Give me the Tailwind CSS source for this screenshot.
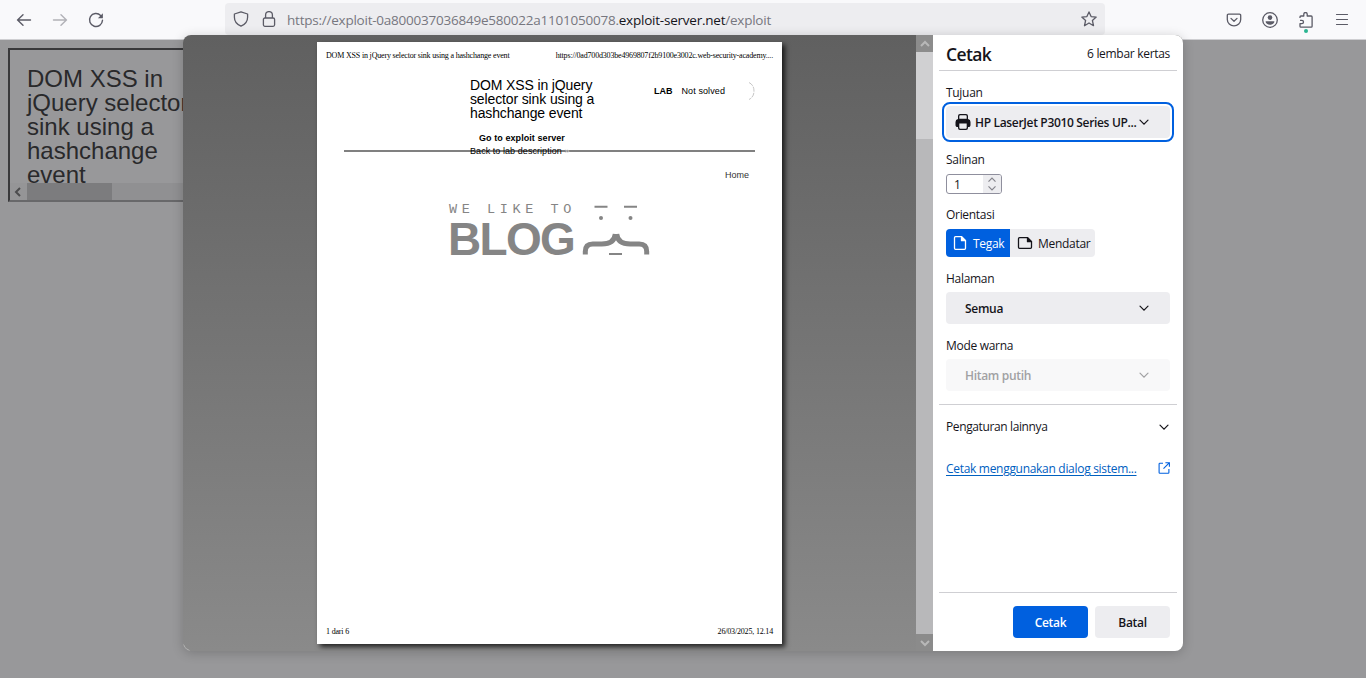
<!DOCTYPE html>
<html lang="id">
<head>
<meta charset="utf-8">
<title>Cetak</title>
<script src="https://cdn.jsdelivr.net/npm/@tailwindcss/browser@4"></script>
</head>
<body class="relative flex h-[678px] w-[1366px] flex-col overflow-hidden bg-[#98989a] font-['Open_Sans','Noto_Sans',sans-serif] text-[#15141a]">

<!-- Toolbar -->
<header class="flex h-10 shrink-0 items-center border-b border-[#cfcfd2] bg-[#f9f9fb] text-[#5b5b66]">
  <div class="flex w-[225px] shrink-0 items-center gap-5 pl-4">
    <svg class="size-4" viewBox="0 0 16 16" fill="none" stroke="currentColor" stroke-width="1.4" stroke-linecap="round" stroke-linejoin="round"><path d="M14.5 8H1.500M7 2.800 1.600 8 7 13.200"/></svg>
    <svg class="size-4 opacity-45" viewBox="0 0 16 16" fill="none" stroke="currentColor" stroke-width="1.4" stroke-linecap="round" stroke-linejoin="round"><path d="M1.500 8h13M9 2.800 14.400 8 9 13.200"/></svg>
    <svg class="size-4" viewBox="0 0 16 16" fill="none" stroke="currentColor" stroke-width="1.4" stroke-linecap="round"><path d="M12.600 3.400A6.500 6.500 0 1 0 14.500 8.300"/><path d="M14.900 1.200v5h-5z" fill="currentColor" stroke="none"/></svg>
  </div>
  <div class="mt-[-1px] flex h-8 w-[880px] shrink-0 items-center rounded bg-[#ededf0] pr-2 pl-2">
    <svg class="size-4" viewBox="0 0 16 16" fill="none" stroke="currentColor" stroke-width="1.3" stroke-linejoin="round"><path d="M8 .8 14.600 3v3.200c0 4.400-2.900 7.400-6.600 9-3.700-1.600-6.600-4.600-6.600-9V3z"/></svg>
    <svg class="ml-3 size-4" viewBox="0 0 16 16" fill="none" stroke="currentColor" stroke-width="1.3"><rect x="2.400" y="7" width="11.200" height="8.300" rx="1.500"/><path d="M4.600 7V4a3.400 3.400 0 0 1 6.800 0v3"/></svg>
    <div class="ml-2.5 grow pt-0.5 text-[13.5px] tracking-[-0.23px] whitespace-nowrap text-[#77777f]">https://exploit-0a800037036849e580022a1101050078.<span class="text-[#15141a]">exploit-server.net</span>/exploit</div>
    <svg class="size-4" viewBox="0 0 16 16" fill="none" stroke="currentColor" stroke-width="1.3" stroke-linejoin="round"><path d="m8 .9 2.100 4.700 5.100.500-3.800 3.400 1.100 5.200L8 12l-4.500 2.700 1.100-5.200L.800 6.100l5.100-.500z"/></svg>
  </div>
  <div class="ml-auto flex items-center gap-5 pr-4">
    <svg class="size-4" viewBox="0 0 16 16" fill="none" stroke="currentColor" stroke-width="1.300" stroke-linecap="round" stroke-linejoin="round"><path d="M2.500 2.200h11a1.200 1.200 0 0 1 1.200 1.200v4a6.700 6.400 0 0 1-13.400 0v-4a1.200 1.200 0 0 1 1.200-1.200z"/><path d="m5 6.400 3 2.900 3-2.900"/></svg>
    <svg class="size-4" viewBox="0 0 16 16" fill="none" stroke="currentColor" stroke-width="1.300"><circle cx="8" cy="8" r="7.300"/><circle cx="8" cy="5.600" r="2.300" fill="currentColor" stroke="none"/><path d="M3.600 9.300h8.800c0 2-2 3.500-4.400 3.500s-4.400-1.500-4.400-3.500z" fill="currentColor" stroke="none"/></svg>
    <div class="relative size-4">
      <svg class="size-4" viewBox="0 0 16 16" fill="none" stroke="currentColor" stroke-width="1.300" stroke-linejoin="round"><path d="M2 6V4.900q0-.900.900-.900H5.800V2.200a1.700 1.700 0 0 1 3.400 0V4h4q.900 0 .900.900v9.400q0 .900-.900.900H2.900q-.900 0-.900-.900V11.700h1.800a1.700 1.700 0 0 0 0-3.400H2"/></svg>
      <span class="absolute top-[17px] left-[6px] size-1 rounded-full bg-[#2ab591]"></span>
    </div>
    <svg class="size-4" viewBox="0 0 16 16" stroke="currentColor" stroke-width="1.200" stroke-linecap="round"><path d="M2.500 2.500h11M2.500 7.500h11M2.500 12.500h11"/></svg>
  </div>
</header>

<!-- Dimmed page with the framed lab -->
<main class="grow px-2 pt-2">
  <div class="flex h-[154px] w-[304px] flex-col overflow-hidden border-2 border-t-[#39393b] border-r-[#68686a] border-b-[#68686a] border-l-[#39393b]">
    <h2 class="grow overflow-hidden pt-[17px] pl-[17px] font-['Liberation_Sans',sans-serif] text-[24px] leading-6 whitespace-nowrap text-[#29292b]">DOM XSS in<br>jQuery selector<br>sink using a<br>hashchange<br>event</h2>
    <div class="flex h-[17px] shrink-0 bg-[#909092]">
      <div class="flex w-[17px] items-center justify-center bg-[#959597] pr-0.5"><svg class="size-2.5" viewBox="0 0 10 10" fill="none" stroke="#4c4c4e" stroke-width="2"><path d="M7 1 3 5l4 4"/></svg></div>
      <div class="w-[85px] bg-[#7c7c7e]"></div>
    </div>
  </div>
</main>

<!-- Print dialog -->
<section class="absolute top-[35px] left-[183px] flex h-[616px] w-[1000px] overflow-hidden rounded-lg bg-linear-to-b from-[#606060] to-[#8a8a8a] shadow-[0_2px_12px_rgba(0,0,0,0.2)]">
  <svg class="absolute bottom-0 left-0 size-2" viewBox="0 0 8 8" fill="none" stroke="#b4b4b4"><path d="M.5 1.500q1 4.500 6 6"/></svg>
  <div class="flex w-[733px] shrink-0 justify-center pt-[7px] font-['Liberation_Sans',sans-serif]">
    <article class="flex h-[602px] w-[465px] flex-col bg-white text-black shadow-[3px_3px_5px_rgba(0,0,0,0.75)]">
      <div class="flex h-[27px] shrink-0 items-center justify-between px-[9px] font-['Liberation_Serif',serif] text-[8px] tracking-[-0.18px] whitespace-nowrap">
        <span>DOM XSS in jQuery selector sink using a hashchange event</span>
        <span>https://0ad700d303be4969807f2b9100e3002c.web-security-academy....</span>
      </div>
      <div class="mx-[27px] flex h-[83px] shrink-0 items-start border-b-2 border-[#808080] pt-[9px]">
        <div class="ml-[126px] w-[184px] whitespace-nowrap">
          <h1 class="text-[14px] leading-[14px] tracking-[-0.13px]">DOM XSS in jQuery<br>selector sink using a<br>hashchange event</h1>
          <p class="mt-3 pl-[9px] text-[9px] leading-3 font-bold tracking-[0.07px]">Go to exploit server</p>
          <p class="relative mt-px text-[9px] leading-3 tracking-[0.06px]">Back to lab description <span class="text-[#ccc]">»</span></p>
        </div>
        <div class="mt-[5px] flex h-[18px] grow items-center text-[9px]"><b>LAB</b><span class="ml-[9px] tracking-[0.1px]">Not solved</span>
          <svg class="mb-0.5 ml-auto h-[18px] w-2" viewBox="0 0 8 18" fill="none" stroke="#b8b8b8" stroke-width=".8"><path d="M2 .5q5 2.500 5 8.500t-5 8.500" stroke-dasharray="5 1"/></svg>
        </div>
      </div>
      <div class="flex h-[46px] shrink-0 justify-end pt-[17px] pr-[33px] text-[9px] leading-3 text-[#333]">Home</div>
      <div class="flex h-[60px] shrink-0 pl-[131px] text-[#858585]">
        <div class="w-[134px] whitespace-nowrap">
          <p class="pt-[6px] pl-[1px] font-['Courier_New','Liberation_Mono',monospace] text-[13.5px] leading-3 tracking-[4.6px]">WE LIKE TO</p>
          <p class="text-[46px] leading-[46px] font-bold tracking-[-1.7px]">BLOG</p>
        </div>
        <svg class="h-[60px] w-[68px]" viewBox="0 0 68 60" fill="none" stroke="#858585"><path d="M12.500 8.700h13M42 8.700h13" stroke-width="2"/><circle cx="19" cy="20" r="2" fill="#858585" stroke="none"/><circle cx="48.500" cy="20" r="2" fill="#858585" stroke="none"/><path d="M3.300 56.500v-3q0-7.500 7.500-7.500h9q12.500 0 13.500-10M64.700 56.500v-3q0-7.500-7.500-7.500h-9q-12.500 0-13.500-10" stroke-width="5"/><path d="M27 56h13" stroke-width="2"/></svg>
      </div>
      <div class="mt-auto flex h-[25px] items-center justify-between px-[9px] font-['Liberation_Serif',serif] text-[8px] tracking-[-0.18px]"><span>1 dari 6</span><span>26/03/2025, 12.14</span></div>
    </article>
  </div>

  <!-- Preview scrollbar -->
  <div class="flex w-[17px] shrink-0 flex-col bg-[#b8b8ba]">
    <div class="flex h-[17px] items-center justify-center bg-[#8c8c8c]"><svg class="size-2.5" viewBox="0 0 10 10" fill="none" stroke="#b8b8b8" stroke-width="2"><path d="m1 7 4-4 4 4"/></svg></div>
    <div class="h-[87px] bg-[#d0d0d2]"></div>
    <div class="mt-auto flex h-[17px] items-center justify-center bg-[#8b8b8b]"><svg class="size-2.5" viewBox="0 0 10 10" fill="none" stroke="#b8b8b8" stroke-width="2"><path d="m1 3 4 4 4-4"/></svg></div>
  </div>

  <!-- Settings -->
  <form class="flex w-[250px] shrink-0 flex-col bg-white px-[6px] text-[12px] leading-5 tracking-[-0.3px] whitespace-nowrap">
    <div class="flex h-9 shrink-0 items-center justify-between border-b border-[#cfcfd3] px-[7px] pt-0.5">
      <h1 class="text-[17.5px] font-semibold tracking-[-0.6px]">Cetak</h1><span>6 lembar kertas</span>
    </div>
    <div class="flex flex-col px-[7px] pt-3">
      <label>Tujuan</label>
      <div class="mt-[3px] flex h-8 items-center rounded bg-[#ededf0] pr-5 pl-[9px] font-semibold outline-2 outline-offset-2 outline-[#0060df]">
        <svg class="size-4 shrink-0" viewBox="0 0 16 16"><path fill="#15141a" d="M3 5V2a2 2 0 0 1 2-2h6a2 2 0 0 1 2 2v3a3 3 0 0 1 2.500 3v3a2 2 0 0 1-2.500 2v1a2 2 0 0 1-2 2H5a2 2 0 0 1-2-2v-1A2 2 0 0 1 .500 11V8A3 3 0 0 1 3 5z"/><path fill="#ededf0" d="M4.300 4.800V2.300q0-1 1-1h5.400q1 0 1 1v2.500zM4.300 9.500h7.400v4.200q0 1-1 1H5.300q-1 0-1-1z"/></svg>
        <span class="ml-1 w-[163px] shrink-0 pt-0.5 tracking-[-0.33px]">HP LaserJet P3010 Series UP...</span>
        <svg class="size-3 shrink-0" viewBox="0 0 12 12" fill="none" stroke="currentColor" stroke-width="1.200" stroke-linecap="round"><path d="m2 4.200 4 4 4-4"/></svg>
      </div>
      <label class="mt-3">Salinan</label>
      <div class="mt-1 flex h-5 w-14 items-center overflow-hidden rounded-[3px] border border-[#8f8f9d]">
        <span class="grow pt-0.5 pl-[7px]">1</span>
        <span class="flex h-full w-[18px] items-center justify-center bg-[#ededf0]"><svg class="h-[14px] w-[10px]" viewBox="0 0 10 14" fill="none" stroke="#85858c" stroke-width="1.200"><path d="m1.500 4.700 3.500-3.500 3.500 3.500M1.500 9.300 5 12.800l3.500-3.500"/></svg></span>
      </div>
      <label class="mt-[11px]">Orientasi</label>
      <div class="mt-1 flex h-7">
        <div class="flex w-16 items-center rounded-l bg-[#0060df] pl-[6px] text-white"><svg class="size-4" viewBox="0 0 16 16" fill="none" stroke="currentColor" stroke-width="1.300" stroke-linejoin="round"><path d="M3.500 1.700h6l4 4v7.600q0 1-1 1h-9q-1 0-1-1V2.700q0-1 1-1z"/><path d="M9.500 1.700v4h4z" fill="currentColor"/></svg><span class="ml-[5px] pt-0.5">Tegak</span></div>
        <div class="flex w-[85px] items-center rounded-r bg-[#ededf0] pl-[7px]"><svg class="size-4" viewBox="0 0 16 16" fill="none" stroke="currentColor" stroke-width="1.300" stroke-linejoin="round"><path d="M2.500 2.700h8l4 4v5.600q0 1-1 1h-11q-1 0-1-1V3.700q0-1 1-1z"/><path d="M10.500 2.700v4h4z" fill="currentColor"/></svg><span class="ml-[5px] pt-0.5">Mendatar</span></div>
      </div>
      <label class="mt-3">Halaman</label>
      <div class="mt-[3px] flex h-8 items-center justify-between rounded bg-[#ededf0] pr-5 pl-[19px] font-semibold"><span class="pt-0.5">Semua</span><svg class="size-3" viewBox="0 0 12 12" fill="none" stroke="currentColor" stroke-width="1.200" stroke-linecap="round"><path d="m2 4.200 4 4 4-4"/></svg></div>
      <label class="mt-3">Mode warna</label>
      <div class="mt-[3px] flex h-8 items-center justify-between rounded bg-[#f8f8f9] pr-5 pl-[19px] font-semibold text-[#a1a1a3]"><span class="pt-0.5">Hitam putih</span><svg class="size-3" viewBox="0 0 12 12" fill="none" stroke="currentColor" stroke-width="1.200" stroke-linecap="round"><path d="m2 4.200 4 4 4-4"/></svg></div>
    </div>
    <div class="mt-[13px] flex items-center justify-between border-t border-[#cfcfd3] px-[7px] pt-3"><span class="tracking-[-0.38px]">Pengaturan lainnya</span><svg class="size-3" viewBox="0 0 12 12" fill="none" stroke="currentColor" stroke-width="1.200" stroke-linecap="round"><path d="m2 4.200 4 4 4-4"/></svg></div>
    <div class="mt-[22px] flex items-center justify-between px-[7px] text-[#0060bf]"><a class="underline underline-offset-2">Cetak menggunakan dialog sistem...</a><svg class="mb-0.5 size-3" viewBox="0 0 12 12" fill="none" stroke="#0060df" stroke-width="1.100"><path d="M5 1.200H1.800q-.700 0-.700.700v8.600q0 .700.700.700h8.400q.700 0 .700-.700V7M7.400.700h4v4M11.200.900 5.500 6.600"/></svg></div>
    <div class="mt-auto flex h-[59px] shrink-0 items-start justify-end gap-[7px] border-t border-[#cfcfd3] px-[7px] pt-[13px] font-semibold">
      <div class="flex h-8 w-[75px] items-center justify-center rounded bg-[#0060df] pt-0.5 text-white">Cetak</div>
      <div class="flex h-8 w-[75px] items-center justify-center rounded bg-[#ededf0] pt-0.5">Batal</div>
    </div>
  </form>
</section>
</body>
</html>
